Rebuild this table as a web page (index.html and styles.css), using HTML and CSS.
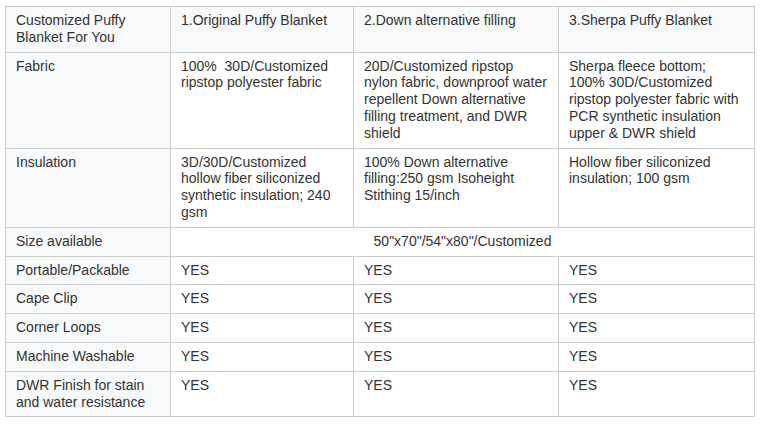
FILE: index.html
```html
<!DOCTYPE html>
<html>
<head>
<meta charset="utf-8">
<link rel="stylesheet" href="styles.css">
</head>
<body>
<table class="spec">
  <colgroup>
    <col class="c1"><col class="c2"><col class="c3"><col class="c4">
  </colgroup>
  <tr class="head">
    <td class="label">Customized Puffy Blanket For You</td>
    <td>1.Original Puffy Blanket</td>
    <td>2.Down alternative filling</td>
    <td>3.Sherpa Puffy Blanket</td>
  </tr>
  <tr>
    <td class="label">Fabric</td>
    <td>100%&nbsp; 30D/Customized ripstop polyester fabric</td>
    <td>20D/Customized ripstop nylon fabric, downproof water repellent Down alternative filling treatment, and DWR shield</td>
    <td>Sherpa fleece bottom; 100% 30D/Customized ripstop polyester fabric with PCR synthetic insulation upper &amp; DWR shield</td>
  </tr>
  <tr>
    <td class="label">Insulation</td>
    <td>3D/30D/Customized hollow fiber siliconized synthetic insulation; 240 gsm</td>
    <td>100% Down alternative filling:250 gsm Isoheight Stithing 15/inch</td>
    <td>Hollow fiber siliconized insulation; 100 gsm</td>
  </tr>
  <tr>
    <td class="label">Size available</td>
    <td class="center" colspan="3">50"x70"/54"x80"/Customized</td>
  </tr>
  <tr>
    <td class="label">Portable/Packable</td>
    <td>YES</td><td>YES</td><td>YES</td>
  </tr>
  <tr>
    <td class="label">Cape Clip</td>
    <td>YES</td><td>YES</td><td>YES</td>
  </tr>
  <tr>
    <td class="label">Corner Loops</td>
    <td>YES</td><td>YES</td><td>YES</td>
  </tr>
  <tr>
    <td class="label">Machine Washable</td>
    <td>YES</td><td>YES</td><td>YES</td>
  </tr>
  <tr>
    <td class="label">DWR Finish for stain and water resistance</td>
    <td>YES</td><td>YES</td><td>YES</td>
  </tr>
</table>
</body>
</html>
```
FILE: styles.css
```css
html, body {
  margin: 0;
  padding: 0;
  background: #ffffff;
}

body {
  padding: 6px 0 0 5px;
}

.spec {
  border-collapse: collapse;
  table-layout: fixed;
  width: 749px;
  font-family: "Liberation Sans", Arial, sans-serif;
  font-size: 14px;
  line-height: 16.8px;
  color: #333333;
}

.c1 { width: 165px; }
.c2 { width: 183px; }
.c3 { width: 205px; }
.c4 { width: 196px; }

.spec td {
  border: 1px solid #cccccc;
  padding: 5px 10px 6px 10px;
  vertical-align: top;
  text-align: left;
}

.spec .head td,
.spec td.label {
  background: #f8f9fa;
}

.spec td.center {
  text-align: center;
}
```
